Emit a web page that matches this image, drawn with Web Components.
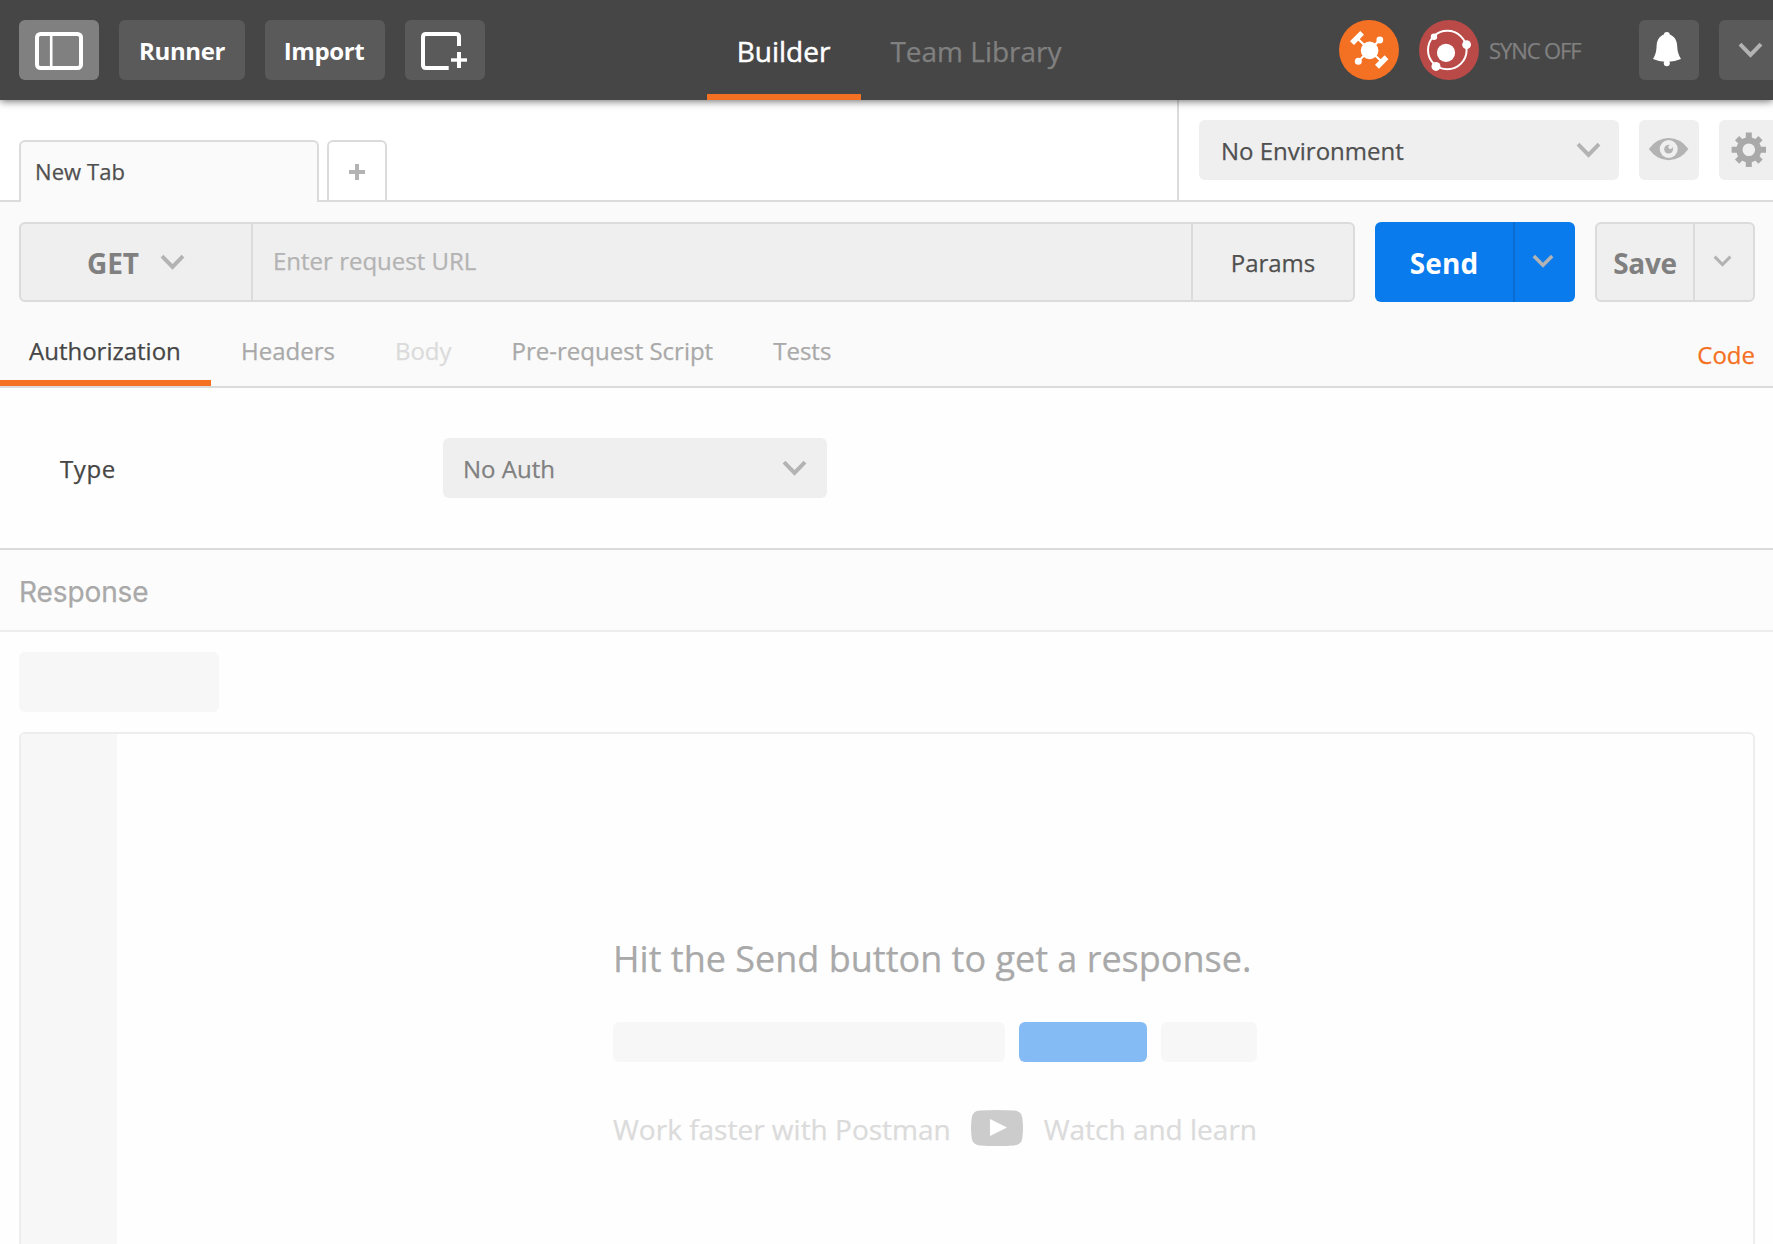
<!DOCTYPE html>
<html lang="en">
<head>
<meta charset="utf-8">
<title>Postman</title>
<style>
html,body{margin:0;height:100%;overflow:hidden;background:#fff}
body{font:24px "Open Sans",sans-serif;color:#505050;-webkit-text-stroke:.25px}
</style>
</head>
<body>
<pm-app></pm-app>
<script>
const define = (name, css, html) => {
  const tpl = document.createElement('template');
  tpl.innerHTML = `<style>*{box-sizing:border-box}:host{box-sizing:border-box}svg{display:block}${css}</style>${html}`;
  customElements.define(name, class extends HTMLElement {
    constructor() {
      super();
      this.attachShadow({ mode: 'open' }).append(tpl.content.cloneNode(true));
    }
  });
};

define('pm-chevron', `
:host{display:block;width:25px;height:16px;flex:none;color:#b3b3b3}
svg{width:100%;height:100%}`,
`<svg viewBox="0 0 25 16"><path d="M2 2.2 12.5 12.8 23 2.2" fill="none" stroke="currentColor" stroke-width="4"/></svg>`);

define('pm-button', `
:host{display:flex;align-items:center;justify-content:center;flex:none;height:60px;border-radius:6px;background:#5a5a5a;color:#fff;font-weight:700;letter-spacing:-.4px;-webkit-text-stroke:0;white-space:nowrap}
:host([active]){background:#808080}
:host([light]){background:#efefef;color:#b3b3b3}`, `<slot></slot>`);

define('pm-nav-tab', `
:host{display:flex;align-items:center;justify-content:center;height:100px;padding-top:2px;font-size:28px;color:#808080;white-space:nowrap;border-bottom:6px solid transparent;border-top:6px solid transparent}
:host([active]){color:#fff;-webkit-text-stroke:.5px;padding-right:1px;border-bottom-color:#f47023}`, `<slot></slot>`);

define('pm-header', `
:host{display:grid;grid-template-columns:707px 632px 500px;height:100px;background:#464646;box-shadow:0 1px 8px rgba(0,0,0,.6);position:relative;z-index:1}
.left,.right{display:flex;align-items:center;gap:20px}
.left{padding-left:19px}
.nav{display:flex}
.sync{font-size:22px;letter-spacing:-1.1px;color:#808080;margin-left:-10px;width:130px;padding-bottom:1px;white-space:nowrap}`,
`<div class="left">
  <pm-button active style="width:80px"><svg width="80" height="60"><rect x="18" y="14" width="44" height="34" rx="3.5" fill="none" stroke="#fff" stroke-width="4"/><path d="M32.2 15v32" stroke="#fff" stroke-width="2.6"/></svg></pm-button>
  <pm-button style="width:126px">Runner</pm-button>
  <pm-button style="width:120px;padding-right:2px">Import</pm-button>
  <pm-button style="width:80px"><svg width="80" height="60" fill="none" stroke="#fff" stroke-width="4"><path d="M54 26V17q0-3-3-3H21q-3 0-3 3v28q0 3 3 3h22.7"/><path d="M54 32v16" /><path d="M46 40h16" stroke-width="3.4"/></svg></pm-button>
</div>
<div class="nav">
  <pm-nav-tab active style="width:154px">Builder</pm-nav-tab>
  <pm-nav-tab style="width:230px">Team Library</pm-nav-tab>
</div>
<div class="right">
  <svg width="60" height="60"><circle cx="30" cy="30" r="30" fill="#f47023"/><g fill="#fff"><path d="M18 18 43 42M40.7 20 19.3 41.3" stroke="#fff" stroke-width="2.2"/><circle cx="30.6" cy="30.4" r="8.8"/><circle cx="40.8" cy="20" r="3.4"/><circle cx="19.3" cy="41.3" r="3.5"/><path d="M11 21.3 21.3 11 25 14.7 15 25zM45.7 35.3 49.4 39.3 40 48.7 36 44.7z"/></g></svg>
  <svg width="60" height="60"><circle cx="30" cy="30" r="30" fill="#b94a48"/><circle cx="28.3" cy="30" r="19.3" fill="none" stroke="#fff" stroke-width="2"/><g fill="#fff"><circle cx="27" cy="32.8" r="9.1"/><circle cx="15" cy="16.7" r="3.2"/><circle cx="47.6" cy="24.6" r="4.4"/><circle cx="17" cy="46.4" r="4.5"/></g></svg>
  <span class="sync">SYNC OFF</span>
  <pm-button style="width:60px"><svg width="60" height="60" fill="#fff"><circle cx="27.8" cy="15" r="3"/><path d="M27.8 14C34 14.5 38 19 38.2 26 38.4 32 39.8 35 42 39Q35 42 27.8 42T14 39C16.2 35 17.4 32 17.6 26 17.8 19 21.6 14.5 27.8 14z"/><circle cx="27.8" cy="43.3" r="3"/></svg></pm-button>
  <pm-button style="width:62px"><pm-chevron></pm-chevron></pm-button>
</div>`);

define('pm-tab-bar', `
:host{display:grid;grid-template-columns:1177px 1fr;height:102px;border-bottom:2px solid #dbdbdb}
.tabs{display:flex;align-items:flex-end;gap:8px;padding-left:19px}
.tab{width:300px;height:62px;margin-bottom:-2px;padding:0 0 2px 14px;display:flex;align-items:center;font-size:22px;letter-spacing:.1px;background:#fafafa;border:2px solid #dbdbdb;border-bottom:0;border-radius:6px 6px 0 0}
.add{width:60px;height:60px;border:2px solid #dbdbdb;border-bottom:0;border-radius:6px 6px 0 0;display:grid;place-items:center}
.env{display:flex;gap:20px;padding:20px 0 0 20px;border-left:2px solid #dbdbdb}
.select{display:flex;justify-content:space-between;width:420px;flex:none;height:60px;align-items:center;padding:0 18.500px 0 22px;background:#efefef;border-radius:6px}
.env pm-button{justify-content:flex-start}`,
`<div class="tabs"><div class="tab">New Tab</div><div class="add"><svg width="16" height="16" style="margin-top:2px"><path d="M8 0v16M0 8h16" stroke="#b3b3b3" stroke-width="4"/></svg></div></div>
<div class="env"><div class="select"><span>No Environment</span><pm-chevron></pm-chevron></div>
<pm-button light style="width:60px"><svg width="60" height="60"><path d="M9.8 29Q18 18 29.7 18T49.4 29Q41.5 40.2 29.7 40.2T9.8 29z" fill="#b3b3b3"/><circle cx="29.7" cy="29" r="9" fill="#efefef"/><circle cx="29.6" cy="29.2" r="4.4" fill="#b3b3b3"/><circle cx="31.3" cy="27" r="2" fill="#efefef"/></svg></pm-button>
<pm-button light style="width:60px"><svg width="60" height="60"><g transform="translate(29.8 29.8)" stroke="#a9a9a9"><circle r="9.4" fill="none" stroke-width="6.2"/><g stroke-width="6"><path d="M0-17.2V-10M0 17.2V10M-17.2 0H-10M17.2 0H10"/><path d="M0-16.6V-10M0 16.6V10M-16.6 0H-10M16.6 0H10" transform="rotate(45)"/></g></g></svg></pm-button></div>`);

define('pm-request-bar', `
:host{display:flex;gap:20px;padding:20px 18px 0 19px;height:100px;background:#fafafa}
.group{display:flex;height:80px;border:2px solid #dbdbdb;border-radius:6px;background:#efefef}
.group>*{display:flex;align-items:center;justify-content:center;white-space:nowrap}
.group>*+*{border-left:2px solid #dbdbdb}
.url{flex:1}
.method{width:230px;gap:21px}
.strong{font-size:28px;font-weight:700;-webkit-text-stroke:0;color:#808080;padding-top:1px}
.input{flex:1;justify-content:flex-start!important;padding:0 0 4px 20px;color:#b3b3b3}
.send{border:0;background:#097bed;color:#fff}
.send>*+*{border-left-color:#0a6cd0}
.send .strong{color:#fff;letter-spacing:.1px}
.group .c{padding:0 4px 2px 0}`,
`<div class="group url"><div class="method"><span class="strong">GET</span><pm-chevron></pm-chevron></div><div class="input">Enter request URL</div><div style="width:162px">Params</div></div>
<div class="group send"><div class="strong" style="width:138px">Send</div><div class="c" style="width:62px"><pm-chevron style="width:22px;height:14px"></pm-chevron></div></div>
<div class="group"><div class="strong" style="width:96px;letter-spacing:-.3px">Save</div><div class="c" style="width:60px"><pm-chevron style="width:19px;height:12px"></pm-chevron></div></div>`);

define('pm-section-tabs', `
:host{display:flex;height:86px;padding-right:18px;background:#fafafa;border-bottom:2px solid #dbdbdb;color:#a9a9a9}
span{display:flex;align-items:center;height:84px;padding:18px 30px 0;border-bottom:6px solid transparent;white-space:nowrap}
.on{width:211px;padding-left:29px;color:#464646;border-bottom-color:#f47023}
.off{color:#dbdbdb}
.code{margin-left:auto;padding:26px 0 0;color:#f47023}`,
`<span class="on">Authorization</span><span>Headers</span><span class="off">Body</span><span>Pre-request Script</span><span>Tests</span><span class="code">Code</span>`);

define('pm-auth', `
:host{display:flex;align-items:flex-start;height:162px;padding:50px 0 0 60px;border-bottom:2px solid #dbdbdb;background:#fefefe}
.label{width:383px;line-height:60px;letter-spacing:.6px;color:#464646;padding-top:1px}
.select{display:flex;justify-content:space-between;align-items:center;width:384px;height:60px;padding:0 20.500px 0 20px;border-radius:6px;background:#efefef;color:#808080}`,
`<div class="label">Type</div><div class="select"><span>No Auth</span><pm-chevron></pm-chevron></div>`);

define('pm-response', `
:host{display:block}
.title{height:82px;padding:3px 0 0 19px;display:flex;align-items:center;background:#fcfcfc;border-bottom:2px solid #ededed;font-family:Inter,sans-serif;font-size:28px;letter-spacing:-.1px;color:#a9a9a9}
.body{padding:20px 18px 0 19px;background:#fefefe}
.ghost{width:200px;height:60px;border-radius:6px;background:#f7f7f7;margin-bottom:20px}
.editor{display:flex;height:560px;border:2px solid #ededed;border-radius:6px}
.gutter{width:96px;background:#f7f7f7;flex:none}
.empty{display:flex;flex-direction:column;width:644px;margin:200px 0 0 496px;white-space:nowrap}
.hit{font-size:36px;line-height:50px;color:#a9a9a9}
.bars{display:flex;gap:14px;margin:38px 0 48px}
.bars i{height:40px;border-radius:6px;background:#f7f7f7}
.more{display:flex;justify-content:space-between;font-size:28px;line-height:38px;color:#dbdbdb}`,
`<div class="title">Response</div>
<div class="body"><div class="ghost"></div><div class="editor"><div class="gutter"></div><div class="empty">
<div class="hit">Hit the Send button to get a response.</div>
<div class="bars"><i style="width:392px"></i><i style="width:128px;background:#84bbf5"></i><i style="width:96px"></i></div>
<div class="more"><span>Work faster with Postman</span><svg width="52" height="36"><path d="M9 .6Q26-.6 43 .6 50.500 1 51.300 8 52.700 18 51.300 28 50.500 35 43 35.400 26 36.600 9 35.400 1.500 35 .7 28-.7 18 .7 8 1.500 1 9 .6z" fill="#ccc"/><path d="M19 9v17l17-8.500z" fill="#fff"/></svg><span>Watch and learn</span></div>
</div></div></div>`);

define('pm-app', `:host{display:flex;flex-direction:column;height:1244px;overflow:hidden}
pm-header,pm-tab-bar,pm-request-bar,pm-section-tabs,pm-auth,pm-response{flex:none}`,
`<pm-header></pm-header><pm-tab-bar></pm-tab-bar><pm-request-bar></pm-request-bar><pm-section-tabs></pm-section-tabs><pm-auth></pm-auth><pm-response></pm-response>`);
</script>
</body>
</html>
